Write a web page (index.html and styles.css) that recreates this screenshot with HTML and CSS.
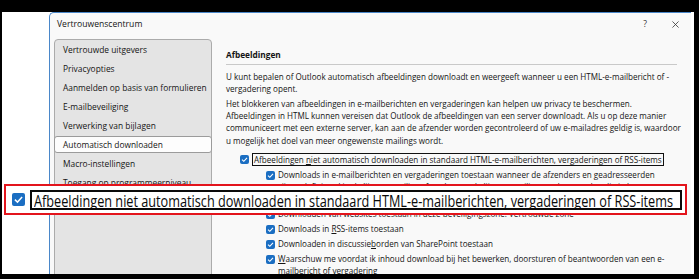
FILE: index.html
```html
<!DOCTYPE html>
<html lang="nl">
<head>
<meta charset="utf-8">
<title>Vertrouwenscentrum</title>
<link rel="stylesheet" href="styles.css">
</head>
<body>
<div class="screen">
  <div class="dialog">
    <div class="titlebar">
      <span class="title">Vertrouwenscentrum</span>
      <span class="tb-btns">
        <span class="help">?</span>
        <svg class="close" width="8" height="8" viewBox="0 0 8 8"><path d="M0.5 0.5 L7.5 7.5 M7.5 0.5 L0.5 7.5" stroke="#333" stroke-width="0.9" fill="none"/></svg>
      </span>
    </div>
    <div class="body">
      <nav class="nav">
        <div class="nav-item">Vertrouwde uitgevers</div>
        <div class="nav-item">Privacyopties</div>
        <div class="nav-item">Aanmelden op basis van formulieren</div>
        <div class="nav-item">E-mailbeveiliging</div>
        <div class="nav-item">Verwerking van bijlagen</div>
        <div class="nav-item selected">Automatisch downloaden</div>
        <div class="nav-item">Macro-instellingen</div>
        <div class="nav-item">Toegang op programmeerniveau</div>
      </nav>
      <main class="content">
        <h1 class="heading">Afbeeldingen</h1>
        <p class="para">U kunt bepalen of Outlook automatisch afbeeldingen downloadt en weergeeft wanneer u een HTML-e-mailbericht of -<br>vergadering opent.</p>
        <p class="para">Het blokkeren van afbeeldingen in e-mailberichten en vergaderingen kan helpen uw privacy te beschermen.<br>Afbeeldingen in HTML kunnen vereisen dat Outlook de afbeeldingen van een server downloadt. Als u op deze manier<br>communiceert met een externe server, kan aan de afzender worden gecontroleerd of uw e-mailadres geldig is, waardoor<br>u mogelijk het doel van meer ongewenste mailings wordt.</p>
        <ul class="opts">
          <li class="opt">
            <span class="cb"><svg viewBox="0 0 9 9"><path d="M2 4.6 L3.8 6.3 L7 2.8" stroke="#fff" stroke-width="1.1" fill="none"/></svg></span>
            <span class="lbl focus">Afbeeldingen <u>n</u>iet automatisch downloaden in standaard HTML-e-mailberichten, vergaderingen of RSS-items</span>
          </li>
          <li class="opt sub">
            <span class="cb"><svg viewBox="0 0 9 9"><path d="M2 4.6 L3.8 6.3 L7 2.8" stroke="#fff" stroke-width="1.1" fill="none"/></svg></span>
            <span class="lbl">Downloads in e-mailberichten en vergaderingen toestaan wanneer de afzenders en geadresseerden<br>zijn gedefinieerd in de lijst met veilige afzenders en de lijst met veilige geadresseerden die in het<br>filter voor ongewenste e-mail worden gebruikt</span>
          </li>
          <li class="opt sub">
            <span class="cb"><svg viewBox="0 0 9 9"><path d="M2 4.6 L3.8 6.3 L7 2.8" stroke="#fff" stroke-width="1.1" fill="none"/></svg></span>
            <span class="lbl">Downloaden van websites toestaan in deze beveiligingszone: Vertrouwde zone</span>
          </li>
          <li class="opt sub">
            <span class="cb"><svg viewBox="0 0 9 9"><path d="M2 4.6 L3.8 6.3 L7 2.8" stroke="#fff" stroke-width="1.1" fill="none"/></svg></span>
            <span class="lbl">Downloads in <u>R</u>SS-items toestaan</span>
          </li>
          <li class="opt sub">
            <span class="cb"><svg viewBox="0 0 9 9"><path d="M2 4.6 L3.8 6.3 L7 2.8" stroke="#fff" stroke-width="1.1" fill="none"/></svg></span>
            <span class="lbl">Downloaden in discussie<u>b</u>orden van SharePoint toestaan</span>
          </li>
          <li class="opt sub">
            <span class="cb"><svg viewBox="0 0 9 9"><path d="M2 4.6 L3.8 6.3 L7 2.8" stroke="#fff" stroke-width="1.1" fill="none"/></svg></span>
            <span class="lbl"><u>W</u>aarschuw me voordat ik inhoud download bij het bewerken, doorsturen of beantwoorden van een e-<br>mailbericht of vergadering</span>
          </li>
        </ul>
      </main>
    </div>
  </div>
  <div class="callout">
    <span class="cb big"><svg viewBox="0 0 9 9"><path d="M2 4.6 L3.8 6.3 L7 2.8" stroke="#fff" stroke-width="1" fill="none"/></svg></span>
    <span class="big-lbl"><span class="big-txt">Afbeeldingen <u>n</u>iet automatisch downloaden in standaard HTML-e-mailberichten, vergaderingen of RSS-items</span></span>
  </div>
</div>
</body>
</html>
```
FILE: styles.css
```css
* { box-sizing: border-box; }
html, body { margin: 0; padding: 0; }
body {
  background: #000;
  width: 699px;
  height: 279px;
  overflow: hidden;
  font-family: "Open Sans", "Noto Sans", sans-serif;
  color: #141414;
}
.screen {
  position: relative;
  margin: 12px 5px 0 2px;
  height: 262px;
  background: #fff;
  overflow: hidden;
  padding-left: 47px;
}
.dialog {
  width: 642px;
  height: 300px;
  background: #f9f9f9;
  border-top: 1px solid #4a87c9;
  border-left: 1px solid #4a87c9;
  border-top-left-radius: 5px;
}
.titlebar {
  height: 26px;
  display: flex;
  align-items: flex-start;
  justify-content: space-between;
  padding-left: 7px;
}
.title {
  font-size: 8.6px;
  line-height: 22px;
}
.tb-btns {
  display: flex;
  align-items: center;
  height: 22px;
  padding-right: 12px;
}
.help {
  font-size: 8.6px;
  color: #333;
  margin-right: 25px;
}
.close { display: block; width: 7px; height: 7px; }
.body {
  display: flex;
  align-items: flex-start;
}
.nav {
  margin-left: 4px;
  width: 158px;
  height: 260px;
  background: #e4e4e4;
  border: 1px solid #ababab;
  border-radius: 4px;
  padding-top: 1px;
  flex: none;
}
.nav-item {
  height: 17px;
  line-height: 17px;
  margin-bottom: 2px;
  padding-left: 8px;
  font-size: 8.4px;
  white-space: nowrap;
}
.nav-item.selected {
  background: #fdfdfd;
  border: 1px solid #9b9b9b;
  border-radius: 3px;
  margin-left: -1px;
  margin-right: -1px;
  line-height: 15px;
}
.content {
  margin-left: 14px;
  width: 451px;
  flex: none;
}
.heading {
  margin: 9px 0 0;
  font-size: 8.3px;
  font-weight: 700;
  line-height: 14px;
  padding-bottom: 2px;
  border-bottom: 1px solid #c9c9c9;
}
.para {
  margin: 2.6px 0 0;
  font-size: 8.1px;
  line-height: 12.3px;
  white-space: nowrap;
}
.heading + .para { margin-top: 5.5px; }
.opts {
  list-style: none;
  margin: 6.6px 0 0;
  padding: 0 0 0 14px;
}
.opt {
  display: flex;
  align-items: flex-start;
  margin-bottom: 2.6px;
  font-size: 8.1px;
  line-height: 12.2px;
  white-space: nowrap;
}
.opt.sub { padding-left: 26px; }
.cb {
  flex: none;
  width: 9px;
  height: 9px;
  margin-top: 2px;
  margin-right: 3px;
  background: #1b6ec2;
  border-radius: 2px;
  display: flex;
}
.cb svg { width: 100%; height: 100%; display: block; }
.lbl.focus {
  border: 1px solid #111;
  line-height: 11px;
  padding: 0 1px;
}
u { text-decoration-thickness: 0.7px; text-underline-offset: 1px; }
.callout {
  position: absolute;
  left: 2px;
  top: 172px;
  width: 683px;
  height: 31px;
  border: 2px solid #e3141c;
  background: #fff;
  display: flex;
  align-items: center;
  padding-left: 6px;
}
.cb.big {
  width: 13px;
  height: 13px;
  margin: 0 5px 0 0;
  border-radius: 2px;
}
.big-lbl {
  border: 2px solid #0a0a0a;
  height: 20px;
  width: 652px;
  display: flex;
  align-items: center;
  padding-left: 2px;
  overflow: hidden;
}
.big-txt {
  font-size: 12.7px;
  white-space: nowrap;
  display: inline-block;
  transform: scaleY(1.3);
  transform-origin: 0 45%;
  color: #0a0a0a;
}
.big-txt u { text-decoration-thickness: 1px; text-underline-offset: 1.5px; }
```
